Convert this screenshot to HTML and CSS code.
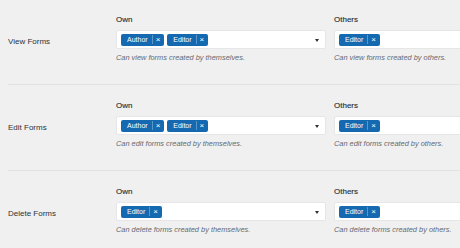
FILE: index.html
```html
<!DOCTYPE html>
<html lang="en">
<head>
  <meta charset="UTF-8" />
  <title>Form Permissions</title>
  <link rel="stylesheet" href="styles.css">
</head>
<body>
  <div class="perm-table">
    <div class="perm-row first">
      <div class="perm-name">View Forms</div>
      <div class="perm-col">
        <div class="col-title">Own</div>
        <div class="picker">
          <span class="chip">Author<span class="chip-x">&times;</span></span>
          <span class="chip">Editor<span class="chip-x">&times;</span></span>
          <span class="caret"></span>
        </div>
        <p class="desc">Can view forms created by themselves.</p>
      </div>
      <div class="perm-col last">
        <div class="col-title">Others</div>
        <div class="picker">
          <span class="chip">Editor<span class="chip-x">&times;</span></span>
        </div>
        <p class="desc">Can view forms created by others.</p>
      </div>
    </div>

    <div class="perm-row">
      <div class="perm-name">Edit Forms</div>
      <div class="perm-col">
        <div class="col-title">Own</div>
        <div class="picker">
          <span class="chip">Author<span class="chip-x">&times;</span></span>
          <span class="chip">Editor<span class="chip-x">&times;</span></span>
          <span class="caret"></span>
        </div>
        <p class="desc">Can edit forms created by themselves.</p>
      </div>
      <div class="perm-col last">
        <div class="col-title">Others</div>
        <div class="picker">
          <span class="chip">Editor<span class="chip-x">&times;</span></span>
        </div>
        <p class="desc">Can edit forms created by others.</p>
      </div>
    </div>

    <div class="perm-row">
      <div class="perm-name">Delete Forms</div>
      <div class="perm-col">
        <div class="col-title">Own</div>
        <div class="picker">
          <span class="chip">Editor<span class="chip-x">&times;</span></span>
          <span class="caret"></span>
        </div>
        <p class="desc">Can delete forms created by themselves.</p>
      </div>
      <div class="perm-col last">
        <div class="col-title">Others</div>
        <div class="picker">
          <span class="chip">Editor<span class="chip-x">&times;</span></span>
        </div>
        <p class="desc">Can delete forms created by others.</p>
      </div>
    </div>
  </div>
</body>
</html>
```

FILE: styles.css
```css
html, body {
  margin: 0;
  padding: 0;
  overflow: hidden;
  background-color: #f0f0f1;
  font-family: "Liberation Sans", Arial, sans-serif;
  color: #1d2327;
}
.perm-table {
  margin-left: 8px;
}
.perm-row {
  display: flex;
  height: 85px;
  border-bottom: 1px solid #e2e2e4;
}
.perm-row.first {
  margin-top: -1px;
}
.perm-name {
  width: 108px;
  flex-shrink: 0;
  align-self: center;
  font-size: 8px;
  line-height: 10px;
  color: #2c3338;
}
.perm-col {
  width: 210px;
  flex-shrink: 0;
  margin-right: 8px;
  padding-top: 16px;
}
/* the second column runs off the window edge */
.perm-col.last {
  flex: 1;
  width: auto;
  min-width: 0;
  margin-right: 0;
  white-space: nowrap;
}
.perm-col.last .picker {
  border-right: none;
  border-radius: 2px 0 0 2px;
}
.col-title {
  font-size: 8px;
  line-height: 10px;
  color: #2c3338;
  margin-bottom: 5px;
  -webkit-text-stroke: 0.15px #2c3338;
}
.picker {
  position: relative;
  box-sizing: border-box;
  height: 19px;
  background-color: #fff;
  border: 1px solid #e6e6e8;
  border-radius: 2px;
  padding: 1px 4px;
  display: flex;
  align-items: center;
  gap: 3px;
}
.chip {
  display: inline-flex;
  align-items: center;
  height: 12px;
  padding-left: 6px;
  background-color: #1469b0;
  border-radius: 2px;
  color: #fff;
  font-size: 7px;
  line-height: 12px;
}
.chip-x {
  margin-left: 4px;
  padding: 0 4px 0 3px;
  height: 9px;
  line-height: 9px;
  border-left: 1px solid rgba(255, 255, 255, 0.3);
  font-size: 8px;
}
/* dropdown arrow */
.caret {
  position: absolute;
  right: 6px;
  top: 8px;
  border-left: 2.5px solid transparent;
  border-right: 2.5px solid transparent;
  border-top: 3px solid #2c3338;
}
.desc {
  margin: 4px 0 0;
  font-size: 7.4px;
  line-height: 10px;
  font-style: italic;
  color: #646970;
  white-space: nowrap;
}
```
